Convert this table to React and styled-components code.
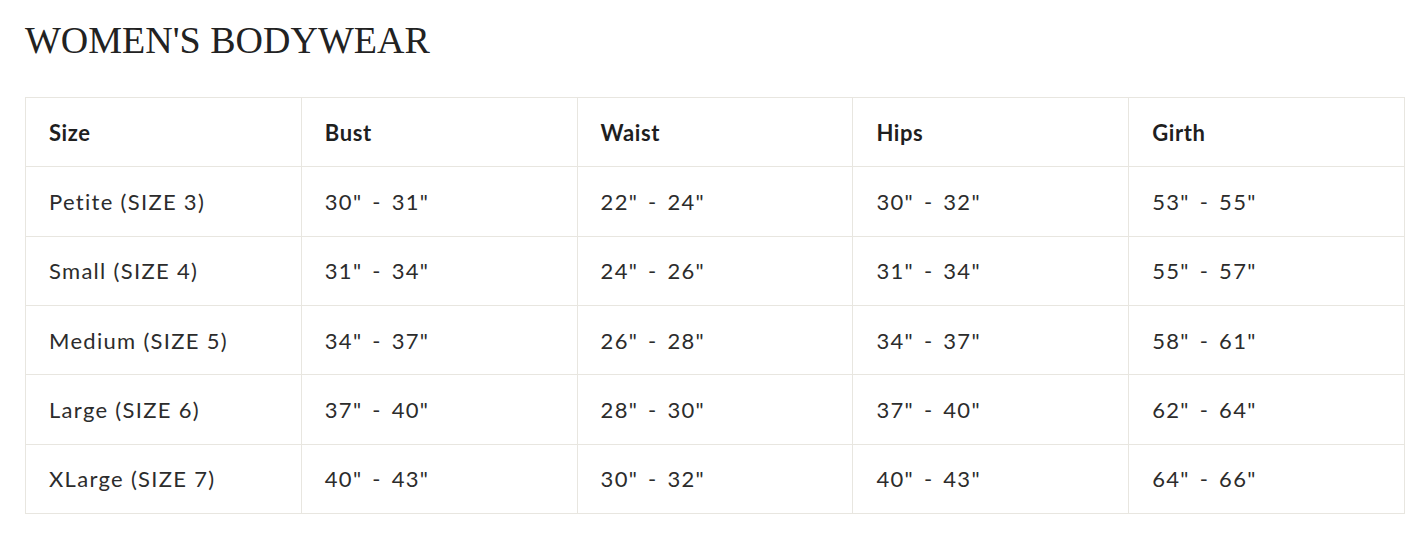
import React from 'react';
import styled, { createGlobalStyle } from 'styled-components';

const GlobalStyle = createGlobalStyle`
  body {
    margin: 0;
    background: #fff;
  }
`;

const rows = [
  ['Petite (SIZE 3)', '30" - 31"', '22" - 24"', '30" - 32"', '53" - 55"'],
  ['Small (SIZE 4)', '31" - 34"', '24" - 26"', '31" - 34"', '55" - 57"'],
  ['Medium (SIZE 5)', '34" - 37"', '26" - 28"', '34" - 37"', '58" - 61"'],
  ['Large (SIZE 6)', '37" - 40"', '28" - 30"', '37" - 40"', '62" - 64"'],
  ['XLarge (SIZE 7)', '40" - 43"', '30" - 32"', '40" - 43"', '64" - 66"'],
];

const heads = ['Size', 'Bust', 'Waist', 'Hips', 'Girth'];

export default function App() {
  return (
    <>
      <GlobalStyle />
      <Page>
        <Title>WOMEN'S BODYWEAR</Title>
        <SizeTable>
          <thead>
            <tr>
              {heads.map((h) => (
                <Cell as="th" key={h} $head>
                  {h}
                </Cell>
              ))}
            </tr>
          </thead>
          <tbody>
            {rows.map((r) => (
              <tr key={r[0]}>
                {r.map((c, i) => (
                  <Cell key={i} $measure={i > 0}>
                    {c}
                  </Cell>
                ))}
              </tr>
            ))}
          </tbody>
        </SizeTable>
      </Page>
    </>
  );
}

const Page = styled.div`
  padding: 19px 12px 32px 25px;
`;

const Title = styled.h1`
  margin: 0 0 36px;
  font-family: "Liberation Serif", serif;
  font-weight: 400;
  font-size: 38px;
  line-height: 42px;
  color: #222;
  letter-spacing: 0;
`;

const SizeTable = styled.table`
  width: 1380px;
  border-collapse: collapse;
  table-layout: fixed;
  font-family: "Lato", sans-serif;
`;

const Cell = styled.td`
  height: 69.33px;
  box-sizing: border-box;
  padding: 0 23px;
  border: 1px solid #e8e6e0;
  text-align: left;
  vertical-align: middle;
  font-size: 22px;
  letter-spacing: ${(p) => (p.$head ? '0.6px' : '1.3px')};
  word-spacing: ${(p) => (p.$measure ? '3px' : '0')};
  font-weight: ${(p) => (p.$head ? 700 : 400)};
  color: ${(p) => (p.$head ? '#1f1f1f' : '#2c2c2c')};
`;
